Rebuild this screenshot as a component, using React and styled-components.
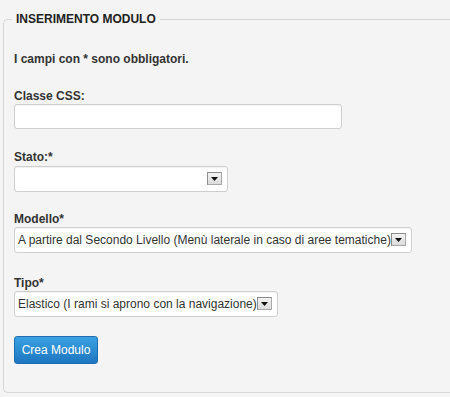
import React from "react";
import styled, { createGlobalStyle } from "styled-components";

const Global = createGlobalStyle`
  html, body { margin: 0; padding: 0; background: #f4f4f4; overflow: hidden; }
  body { font-family: "Liberation Sans", Arial, sans-serif; }
`;

const Panel = styled.fieldset`
  box-sizing: border-box;
  width: 447px;
  min-width: 0;
  margin: 12px 0 0 3px;
  padding: 0 10px 28px 10px;
  border: 1px solid #d6d6d6;
  border-right: none;
  border-radius: 5px 0 0 5px;
  background: #f4f4f4;
`;

const Legend = styled.legend`
  font: bold 12px/14px "Liberation Sans", Arial, sans-serif;
  color: #222;
  padding: 0 4px;
  margin-left: -2px;
  text-transform: uppercase;
`;

const Note = styled.p`
  font: bold 12px/14px "Liberation Sans", Arial, sans-serif;
  color: #333;
  margin: 26px 0 23px;
`;

const Field = styled.div`
  margin-bottom: ${(p) => p.$gap}px;
`;

const Label = styled.label`
  display: block;
  font: bold 12px/14px "Liberation Sans", Arial, sans-serif;
  color: #333;
  margin-bottom: 1px;
`;

const TextInput = styled.input`
  display: block;
  box-sizing: border-box;
  width: 328px;
  height: 25px;
  margin: 0;
  border: 1px solid #cfcfcf;
  border-radius: 3px;
  background: #fff;
  box-shadow: inset 0 1px 1px rgba(0, 0, 0, 0.05);
  font: 12px "Liberation Sans", Arial, sans-serif;
  padding: 0 4px;
  outline: none;
`;

const Select = styled.div`
  display: inline-flex;
  align-items: center;
  justify-content: space-between;
  box-sizing: border-box;
  height: 26px;
  ${(p) => (p.$width ? `width: ${p.$width}px;` : "")}
  padding: 0 5px 0 3px;
  border: 1px solid #cfcfcf;
  border-radius: 3px;
  background: #fff;
  box-shadow: inset 0 1px 1px rgba(0, 0, 0, 0.05);
  font: 12px/14px "Liberation Sans", Arial, sans-serif;
  color: #333;
  white-space: nowrap;
`;

const Arrow = styled.span`
  display: flex;
  align-items: center;
  justify-content: center;
  box-sizing: border-box;
  width: 15px;
  height: 13px;
  flex: none;
  border: 1px solid #8c8c8c;
  border-right-color: #a8a8a8;
  border-bottom-color: #a8a8a8;
  background: linear-gradient(#f2f2f2, #dcdcdc);
  margin-top: -1px;
`;

const Button = styled.button`
  box-sizing: border-box;
  height: 28px;
  width: 84px;
  padding: 0;
  border: 1px solid #1c6eb0;
  border-radius: 3px;
  background: linear-gradient(#3ba1e3, #1d76bf);
  color: #fff;
  font: 12px "Liberation Sans", Arial, sans-serif;
  cursor: pointer;
`;

const Caret = () => (
  <svg width="7" height="4" viewBox="0 0 7 4">
    <path d="M0 0 H7 L3.5 4 Z" fill="#111" />
  </svg>
);

const Dropdown = ({ value, width }) => (
  <Select $width={width}>
    <span>{value}</span>
    <Arrow>
      <Caret />
    </Arrow>
  </Select>
);

export default function App() {
  return (
    <>
      <Global />
      <Panel>
        <Legend>Inserimento Modulo</Legend>
        <Note>I campi con * sono obbligatori.</Note>
        <Field $gap={21}>
          <Label>Classe CSS:</Label>
          <TextInput type="text" />
        </Field>
        <Field $gap={20}>
          <Label>Stato:*</Label>
          <Dropdown value="" width={214} />
        </Field>
        <Field $gap={23}>
          <Label>Modello*</Label>
          <Dropdown value="A partire dal Secondo Livello (Menù laterale in caso di aree tematiche)" />
        </Field>
        <Field $gap={19}>
          <Label>Tipo*</Label>
          <Dropdown value="Elastico (I rami si aprono con la navigazione)" />
        </Field>
        <Button type="button">Crea Modulo</Button>
      </Panel>
    </>
  );
}
